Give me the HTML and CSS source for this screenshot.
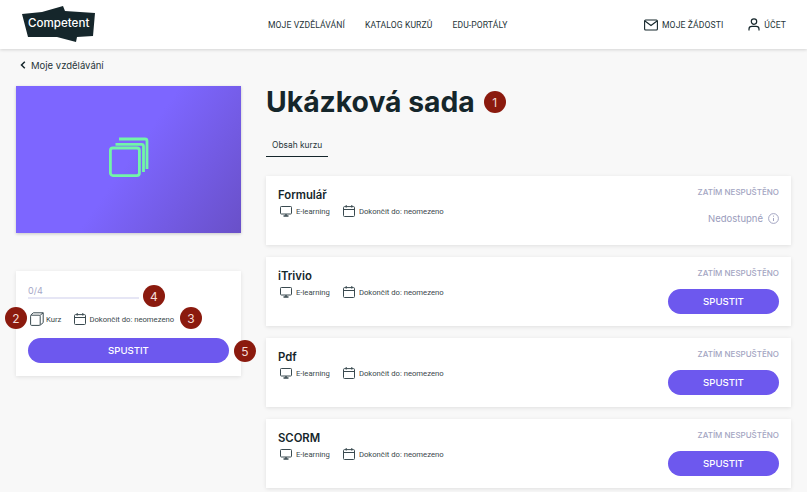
FILE: index.html
```html
<!DOCTYPE html>
<html lang="cs">
<head>
  <meta charset="UTF-8"/>
  <meta name="viewport" content="width=device-width, initial-scale=1.0"/>
  <title>Ukázková sada</title>
  <link rel="stylesheet" href="styles.css">
</head>
<body>

  <!-- Top bar -->
  <div class="header">
    <div class="logo">
      <svg class="logo-shape" width="73" height="37" viewBox="0 0 73 37"><polygon fill="#15262b" points="0,8 20,6 41,0 43,5 73,7 71,30 55,31 54,36 35,31 6,31"/></svg>
      <span class="logo-text">Competent</span>
    </div>
    <div class="nav">
      <div class="nav-item">MOJE VZDĚLÁVÁNÍ</div>
      <div class="nav-item">KATALOG KURZŮ</div>
      <div class="nav-item">EDU-PORTÁLY</div>
    </div>
    <div class="nav-right">
      <div class="nav-item with-icon">
        <svg width="14" height="12" viewBox="0 0 14 12" fill="none" stroke="#15262b" stroke-width="1.1"><rect x="0.6" y="1" width="12.8" height="10" rx="1"/><path d="M1 2l6 4.5L13 2"/></svg>
        MOJE ŽÁDOSTI
      </div>
      <div class="nav-item with-icon">
        <svg width="12" height="13" viewBox="0 0 12 13" fill="none" stroke="#15262b" stroke-width="1.2"><circle cx="6" cy="3.6" r="2.7"/><path d="M1 12.5v-1.5c0-1.6 1.3-2.6 2.8-2.6h4.4c1.5 0 2.8 1 2.8 2.6v1.5"/></svg>
        ÚČET
      </div>
    </div>
  </div>

  <div class="page">
    <!-- Left column -->
    <div class="side">
      <div class="back">
        <svg width="6" height="8" viewBox="0 0 6 8" fill="none" stroke="#15262b" stroke-width="1.5"><path d="M4.8 0.8L1.5 4l3.3 3.2"/></svg>
        Moje vzdělávání
      </div>
      <div class="hero">
        <svg width="40" height="40" viewBox="0 0 40 40" fill="none" stroke="#72f5a8" stroke-width="2.8">
          <path d="M10 2H36a2 2 0 0 1 2 2V32"/>
          <path d="M6.5 7.3H32.5a2 2 0 0 1 2 2V35"/>
          <rect x="1.4" y="11" width="29" height="27.6" rx="2.5"/>
        </svg>
      </div>
      <div class="summary">
        <div class="progress-label">0/4</div>
        <div class="progress-bar"></div>
        <div class="meta summary-meta">
          <span class="meta-item">
            <svg width="14" height="14" viewBox="0 0 14 14" fill="none" stroke="#3a4a50" stroke-width="1"><rect x="0.6" y="3.2" width="9.6" height="10.2" rx="1"/><path d="M10.2 3.2L13.2 0.8V10.6L10.2 13.2M0.6 3.2L3.4 0.8H13.2"/></svg>
            Kurz
          </span>
          <span class="meta-item">
            <svg class="cal" width="12" height="12" viewBox="0 0 12 12" fill="none" stroke="#3a4a50" stroke-width="1"><rect x="0.5" y="1.6" width="11" height="9.9" rx="1"/><path d="M0.5 4.5h11M3.2 0v2.6M8.8 0v2.6"/></svg>
            Dokončit do: neomezeno
          </span>
        </div>
        <div class="btn btn-wide">SPUSTIT</div>
        <div class="num num-2">2</div>
        <div class="num num-3">3</div>
        <div class="num num-4">4</div>
        <div class="num num-5">5</div>
      </div>
    </div>

    <!-- Course content -->
    <div class="main">
      <div class="title-row">
        <h1 class="title">Ukázková sada</h1>
        <div class="num">1</div>
      </div>
      <div class="tabs"><div class="tab active">Obsah kurzu</div></div>

      <div class="course-card">
        <div class="course-info">
          <div class="course-title">Formulář</div>
          <div class="meta">
            <span class="meta-item">
              <svg width="12" height="11" viewBox="0 0 12 11" fill="none" stroke="#3a4a50" stroke-width="1"><rect x="0.5" y="0.5" width="11" height="7.5" rx="0.8"/><path d="M3.5 10h5M6 8v2" stroke-width="1.4"/></svg>
              E-learning
            </span>
            <span class="meta-item">
              <svg class="cal" width="12" height="12" viewBox="0 0 12 12" fill="none" stroke="#3a4a50" stroke-width="1"><rect x="0.5" y="1.6" width="11" height="9.9" rx="1"/><path d="M0.5 4.5h11M3.2 0v2.6M8.8 0v2.6"/></svg>
              Dokončit do: neomezeno
            </span>
          </div>
        </div>
        <div class="course-action">
          <div class="status">ZATÍM NESPUŠTĚNO</div>
          <div class="unavailable">
            Nedostupné
            <svg width="11" height="11" viewBox="0 0 11 11" fill="none" stroke="#9a9cbc" stroke-width="0.9"><circle cx="5.5" cy="5.5" r="4.9"/><path d="M5.5 5v3M5.5 2.6v1.1"/></svg>
          </div>
        </div>
      </div>

      <div class="course-card">
        <div class="course-info">
          <div class="course-title">iTrivio</div>
          <div class="meta">
            <span class="meta-item">
              <svg width="12" height="11" viewBox="0 0 12 11" fill="none" stroke="#3a4a50" stroke-width="1"><rect x="0.5" y="0.5" width="11" height="7.5" rx="0.8"/><path d="M3.5 10h5M6 8v2" stroke-width="1.4"/></svg>
              E-learning
            </span>
            <span class="meta-item">
              <svg class="cal" width="12" height="12" viewBox="0 0 12 12" fill="none" stroke="#3a4a50" stroke-width="1"><rect x="0.5" y="1.6" width="11" height="9.9" rx="1"/><path d="M0.5 4.5h11M3.2 0v2.6M8.8 0v2.6"/></svg>
              Dokončit do: neomezeno
            </span>
          </div>
        </div>
        <div class="course-action">
          <div class="status">ZATÍM NESPUŠTĚNO</div>
          <div class="btn btn-small">SPUSTIT</div>
        </div>
      </div>

      <div class="course-card">
        <div class="course-info">
          <div class="course-title">Pdf</div>
          <div class="meta">
            <span class="meta-item">
              <svg width="12" height="11" viewBox="0 0 12 11" fill="none" stroke="#3a4a50" stroke-width="1"><rect x="0.5" y="0.5" width="11" height="7.5" rx="0.8"/><path d="M3.5 10h5M6 8v2" stroke-width="1.4"/></svg>
              E-learning
            </span>
            <span class="meta-item">
              <svg class="cal" width="12" height="12" viewBox="0 0 12 12" fill="none" stroke="#3a4a50" stroke-width="1"><rect x="0.5" y="1.6" width="11" height="9.9" rx="1"/><path d="M0.5 4.5h11M3.2 0v2.6M8.8 0v2.6"/></svg>
              Dokončit do: neomezeno
            </span>
          </div>
        </div>
        <div class="course-action">
          <div class="status">ZATÍM NESPUŠTĚNO</div>
          <div class="btn btn-small">SPUSTIT</div>
        </div>
      </div>

      <div class="course-card">
        <div class="course-info">
          <div class="course-title">SCORM</div>
          <div class="meta">
            <span class="meta-item">
              <svg width="12" height="11" viewBox="0 0 12 11" fill="none" stroke="#3a4a50" stroke-width="1"><rect x="0.5" y="0.5" width="11" height="7.5" rx="0.8"/><path d="M3.5 10h5M6 8v2" stroke-width="1.4"/></svg>
              E-learning
            </span>
            <span class="meta-item">
              <svg class="cal" width="12" height="12" viewBox="0 0 12 12" fill="none" stroke="#3a4a50" stroke-width="1"><rect x="0.5" y="1.6" width="11" height="9.9" rx="1"/><path d="M0.5 4.5h11M3.2 0v2.6M8.8 0v2.6"/></svg>
              Dokončit do: neomezeno
            </span>
          </div>
        </div>
        <div class="course-action">
          <div class="status">ZATÍM NESPUŠTĚNO</div>
          <div class="btn btn-small">SPUSTIT</div>
        </div>
      </div>
    </div>
  </div>

</body>
</html>
```

FILE: styles.css
```css
html, body { height: 100%; }
body { font-family: Inter, "Noto Sans", sans-serif; background: #f8f8f8; margin: 0; color: #15262b; overflow: hidden; }

.header {
  height: 49px;
  background: #fff;
  box-shadow: 0 1px 3px rgba(0,0,0,0.15);
  display: flex;
  align-items: center;
  padding: 0 21px 0 22px;
  position: relative;
}
.logo { position: relative; width: 73px; height: 37px; margin-right: 173px; }
.logo-shape { display: block; }
.logo-text { position: absolute; left: 6px; top: 10px; color: #fff; font-size: 11.6px; font-weight: 500; }
.nav { display: flex; gap: 20px; }
.nav-right { display: flex; gap: 25px; margin-left: auto; }
.nav-item { font-family: Roboto, sans-serif; font-size: 8.6px; color: #263539; letter-spacing: 0.1px; white-space: nowrap; }
.with-icon { display: flex; align-items: center; gap: 4px; }

.page { display: flex; padding: 0 16px; gap: 25px; }
.side { width: 225px; flex-shrink: 0; }
.back { display: flex; align-items: center; gap: 5px; height: 16px; margin: 8px 0 13px 4px; font-size: 9.5px; color: #263539; }

.hero {
  height: 147px;
  box-sizing: border-box;
  padding-bottom: 5px;
  background: linear-gradient(125deg, #7d66ff 0%, #7d66ff 50%, #6950c8 100%);
  box-shadow: 0 1px 3px rgba(0,0,0,0.2);
  display: flex;
  align-items: center;
  justify-content: center;
}

.summary {
  position: relative;
  margin-top: 38px;
  height: 105px;
  box-sizing: border-box;
  background: #fff;
  box-shadow: 0 1px 4px rgba(0,0,0,0.1);
  padding: 14px 12px 0;
}
.progress-label { font-size: 9px; color: #a6a8c8; height: 12px; }
.progress-bar { width: 111px; height: 2px; background: #e6e6f5; }
.summary-meta { margin-top: 13px; gap: 11px; }
.summary-meta .meta-item:first-child { gap: 2px; }
.summary-meta .meta-item:last-child { gap: 3px; }

.meta { display: flex; align-items: center; gap: 13px; margin-left: 2px; }
.meta-item { display: flex; align-items: center; gap: 4px; font-family: Roboto, sans-serif; font-size: 7.7px; color: #3a474c; white-space: nowrap; }
.cal { margin-top: -1px; }

.btn {
  background: #6d58ee;
  color: #fff;
  border-radius: 13px;
  height: 25px;
  display: flex;
  align-items: center;
  justify-content: center;
  font-size: 9.6px;
  font-weight: 500;
}
.btn-wide { width: 201px; margin-top: 12px; }
.btn-small { width: 111px; }

.num {
  width: 22px;
  height: 22px;
  border-radius: 50%;
  background: #8b1a0e;
  color: #f4dcd8;
  font-size: 12px;
  display: flex;
  align-items: center;
  justify-content: center;
  flex-shrink: 0;
}
.num-2 { position: absolute; left: -11px; top: 36px; }
.num-3 { position: absolute; left: 164px; top: 36px; }
.num-4 { position: absolute; left: 127px; top: 14px; }
.num-5 { position: absolute; left: 218px; top: 69px; }

.main { flex: 1; min-width: 0; }
.title-row { display: flex; align-items: center; gap: 9px; height: 36px; margin-top: 35px; }
.title { margin: 0; font-size: 28.3px; font-weight: 700; color: #15262b; letter-spacing: 0; }
.tabs { display: flex; margin-top: 19px; margin-bottom: 19px; }
.tab { font-size: 8.4px; height: 18px; box-sizing: border-box; padding: 1px 6px 0; white-space: nowrap; }
.tab.active { border-bottom: 1px solid #15262b; color: #263539; }

.course-card {
  height: 69px;
  box-sizing: border-box;
  background: #fff;
  box-shadow: 0 1px 4px rgba(0,0,0,0.1);
  margin-bottom: 12px;
  padding: 11px 12px 0;
  display: flex;
  justify-content: space-between;
}
.course-title { font-size: 11.3px; font-weight: 600; color: #15262b; margin: 1px 0 4px; }
.course-action { display: flex; flex-direction: column; align-items: flex-end; gap: 11px; }
.status { font-size: 8px; font-weight: 500; color: #a3a5c2; }
.unavailable { display: flex; align-items: center; gap: 5px; margin-top: 5px; font-size: 9.5px; color: #9a9cbc; }
```
